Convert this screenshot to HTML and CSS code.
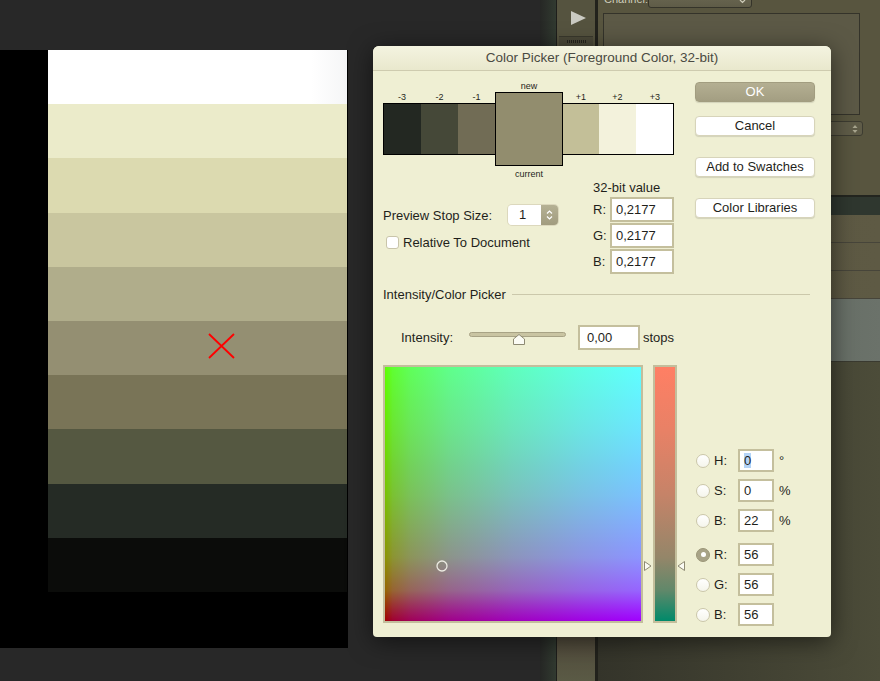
FILE: index.html
```html
<!DOCTYPE html>
<html>
<head>
<meta charset="utf-8">
<title>Color Picker</title>
<link rel="stylesheet" href="styles.css">
</head>
<body>
<div class="screen">
  <div class="desk">
    <div class="doc-col">
      <div class="doc">
        <div class="stripes">
          <div class="stripe s1"></div>
          <div class="stripe s2"></div>
          <div class="stripe s3"></div>
          <div class="stripe s4"></div>
          <div class="stripe s5"></div>
          <div class="stripe s6"></div>
          <div class="stripe s7"></div>
          <div class="stripe s8"></div>
          <div class="stripe s9"></div>
          <div class="stripe s10"></div>
        </div>
        <svg class="xmark" width="27" height="26" viewBox="0 0 27 26"><path d="M1 1 L26 25 M26 1 L1 25" stroke="#ff0000" stroke-width="1.8" fill="none"/></svg>
      </div>
    </div>
    <div class="gap-col"></div>
    <div class="dock">
      <div class="dock-edge"></div>
      <div class="toolbar">
        <div class="play-btn"><svg width="16" height="14" viewBox="0 0 16 14"><polygon points="1,0 16,7 1,14" fill="#cacac2"/></svg></div>
        <div class="grip"><div class="grip-dots"></div></div>
        <div class="toolbar-fill"></div>
      </div>
      <div class="dock-divider"></div>
      <div class="panel">
        <div class="channel-row"><span class="ch-label">Channel:</span><div class="ch-select"><svg width="7" height="5" viewBox="0 0 7 5"><path d="M1 1 L3.5 3.5 L6 1" stroke="#cfcdbb" stroke-width="1.2" fill="none"/></svg></div></div>
        <div class="panel-box"></div>
        <div class="panel-select"><svg width="6" height="10" viewBox="0 0 6 10"><polygon points="3,1 5.5,4 0.5,4" fill="#a9a68f"/><polygon points="3,9 5.5,6 0.5,6" fill="#a9a68f"/></svg></div>
        <div class="panel-spacer"></div>
        <div class="layer-head"></div>
        <div class="layer-row"></div>
        <div class="layer-row"></div>
        <div class="layer-row"></div>
        <div class="layer-row active"></div>
        <div class="panel-fill"></div>
      </div>
    </div>
  </div>

  <div class="dialog">
    <div class="titlebar">Color Picker (Foreground Color, 32-bit)</div>
    <div class="dlg-body">
      <div class="top">
        <div class="left-col">
          <div class="swatches">
            <div class="sw first"><div class="sw-label">-3</div><div class="sw-box c-3"></div></div>
            <div class="sw"><div class="sw-label">-2</div><div class="sw-box c-2"></div></div>
            <div class="sw"><div class="sw-label">-1</div><div class="sw-box c-1"></div></div>
            <div class="sw-new"><div class="sw-label">new</div><div class="sw-box c0"></div><div class="sw-label bottom">current</div></div>
            <div class="sw narrow"><div class="sw-label">+1</div><div class="sw-box c1"></div></div>
            <div class="sw"><div class="sw-label">+2</div><div class="sw-box c2"></div></div>
            <div class="sw last"><div class="sw-label">+3</div><div class="sw-box c3"></div></div>
          </div>
          <div class="below">
            <div class="preview-col">
              <div class="stop-row">
                <span class="stop-label">Preview Stop Size:</span>
                <div class="stepper">
                  <span class="stepper-val">1</span>
                  <span class="stepper-arrows"><svg width="7" height="12" viewBox="0 0 7 12"><path d="M1 4.5 L3.5 2 L6 4.5 M1 7.5 L3.5 10 L6 7.5" stroke="#fff" stroke-width="1.2" fill="none"/></svg></span>
                </div>
              </div>
              <div class="check-row"><span class="checkbox"></span><span>Relative To Document</span></div>
            </div>
            <div class="bit-col">
              <div class="bit-title">32-bit value</div>
              <div class="bit-rows">
                <div class="bit-row"><span class="bit-label">R:</span><span class="field bit-field">0,2177</span></div>
                <div class="bit-row"><span class="bit-label">G:</span><span class="field bit-field">0,2177</span></div>
                <div class="bit-row"><span class="bit-label">B:</span><span class="field bit-field">0,2177</span></div>
              </div>
            </div>
          </div>
        </div>
        <div class="btn-col">
          <div class="btn btn-ok">OK</div>
          <div class="btn btn-cancel">Cancel</div>
          <div class="btn btn-sp">Add to Swatches</div>
          <div class="btn btn-sp">Color Libraries</div>
        </div>
      </div>

      <div class="section-head"><span>Intensity/Color Picker</span><span class="rule"></span></div>

      <div class="intensity-row">
        <span class="int-label">Intensity:</span>
        <svg class="slider" width="97" height="14" viewBox="0 0 97 14">
          <rect x="0.5" y="0.5" width="96" height="4" rx="2" fill="#c9c4a2" stroke="#a8a385"/>
          <path d="M44.5 12.5 L44.5 7 L50 2.5 L55.5 7 L55.5 12.5 Z" fill="#fbfbf4" stroke="#8e8a73" stroke-width="1"/>
        </svg>
        <span class="field int-field">0,00</span>
        <span class="stops">stops</span>
      </div>

      <div class="picker">
        <div class="field-box">
          <div class="field-grad"></div>
          <svg class="marker" width="12" height="12" viewBox="0 0 12 12"><circle cx="6" cy="6" r="5" stroke="#ecebe2" stroke-width="1.3" fill="none"/></svg>
        </div>
        <div class="strip-wrap">
          <div class="strip"></div>
          <svg class="arr arr-l" width="8" height="10" viewBox="0 0 8 10"><path d="M0.5 0.5 L0.5 9.5 L7 5 Z" fill="#fbfbf4" stroke="#8e8a73"/></svg>
          <svg class="arr arr-r" width="8" height="10" viewBox="0 0 8 10"><path d="M7.5 0.5 L7.5 9.5 L1 5 Z" fill="#fbfbf4" stroke="#8e8a73"/></svg>
        </div>
        <div class="hsb">
          <div class="hsb-row"><span class="radio"></span><span class="hsb-label">H:</span><span class="field hsb-field"><span class="sel">0</span></span><span class="unit">°</span></div>
          <div class="hsb-row"><span class="radio"></span><span class="hsb-label">S:</span><span class="field hsb-field">0</span><span class="unit">%</span></div>
          <div class="hsb-row"><span class="radio"></span><span class="hsb-label">B:</span><span class="field hsb-field">22</span><span class="unit">%</span></div>
          <div class="hsb-row gap"><span class="radio on"><span class="dot"></span></span><span class="hsb-label">R:</span><span class="field hsb-field">56</span></div>
          <div class="hsb-row"><span class="radio"></span><span class="hsb-label">G:</span><span class="field hsb-field">56</span></div>
          <div class="hsb-row"><span class="radio"></span><span class="hsb-label">B:</span><span class="field hsb-field">56</span></div>
        </div>
      </div>
    </div>
  </div>
</div>
</body>
</html>
```

FILE: styles.css
```css
* { box-sizing: border-box; }
html, body { margin: 0; padding: 0; }
body {
  width: 880px;
  height: 681px;
  overflow: hidden;
  background: #282828;
  font-family: "Liberation Sans", Arial, sans-serif;
  color: #1f1f1b;
}
.screen { position: relative; width: 880px; height: 681px; overflow: hidden; }
.desk { display: flex; height: 681px; }

/* document canvas */
.doc-col { width: 348px; padding-top: 50px; }
.doc { position: relative; width: 348px; height: 598px; background: #000; padding-left: 48px; }
.stripes { width: 299px; height: 542px; display: flex; flex-direction: column; }
.stripe { flex: 1; }
.s1 { background: linear-gradient(to right, #ffffff 88%, #f5f6f7); }
.s2 { background: #ebebca; }
.s3 { background: #dcdab0; }
.s4 { background: #c9c69f; }
.s5 { background: #b0ad8b; }
.s6 { background: #948f72; }
.s7 { background: #797457; }
.s8 { background: #555841; }
.s9 { background: #252b25; }
.s10 { background: #0b0c0a; }
.xmark { position: absolute; left: 208px; top: 283px; }

.gap-col { width: 192px; background: #282828; }

/* right dock */
.dock { width: 340px; display: flex; }
.dock-edge { width: 17px; background: linear-gradient(to right, #262725, #313a30); border-right: 1px solid #1e1e1b; }
.toolbar { width: 38px; background: #55533f; display: flex; flex-direction: column; }
.play-btn { height: 36px; display: flex; align-items: center; justify-content: center; padding-left: 3px; }
.grip { height: 10px; margin: 0 2px; background: #4b4939; border-top: 1px solid #3a382d; display: flex; align-items: center; justify-content: center; }
.grip-dots { width: 19px; height: 3px; background: repeating-linear-gradient(to right, #25241d 0 1px, transparent 1px 2px); }
.toolbar-fill { flex: 1; background: linear-gradient(to bottom, #4d4c3c 0%, #4e4437 90%, #5a5a45 100%); }
.dock-divider { width: 3px; background: #22221c; }
.panel { flex: 1; background: #58553f; display: flex; flex-direction: column; }
.channel-row { height: 13px; display: flex; padding-left: 6px; }
.ch-label { font-size: 11px; line-height: 13px; margin-top: -7px; color: #cfcdbb; width: 44px; }
.ch-select { width: 104px; height: 18px; margin-top: -10px; background: linear-gradient(#6c6953, #5f5c48); border: 1px solid #35342a; border-radius: 3px; display: flex; justify-content: flex-end; align-items: flex-end; padding: 0 5px 3px 0; }
.panel-box { height: 102px; margin: 0 20px 0 5px; border: 1px solid #34332a; background: #5c5946; }
.panel-select { height: 15px; margin: 6px 17px 0 150px; border: 1px solid #3d3c31; border-radius: 3px; background: #5f5c48; display: flex; justify-content: flex-end; align-items: center; padding-right: 4px; }
.panel-spacer { height: 59px; }
.layer-head { height: 20px; background: #2f372f; border-top: 2px solid #23251f; }
.layer-row { height: 28px; border-bottom: 1px solid #47453a; background: linear-gradient(to right, #5b5641, #5e5a44); }
.layer-row.active { height: 63px; background: linear-gradient(to right, #566157, #6b726a); border-bottom: 1px solid #3a3a30; }
.panel-fill { flex: 1; background: linear-gradient(to right, #34342a, #4c4c39); }

/* dialog */
.dialog {
  position: absolute;
  left: 373px;
  top: 46px;
  width: 458px;
  height: 591px;
  background: #efefd3;
  border-radius: 6px 6px 4px 4px;
  box-shadow: 0 4px 24px rgba(0, 0, 0, 0.55);
  overflow: hidden;
}
.titlebar {
  height: 25px;
  border-bottom: 1px solid #cecbaf;
  background: linear-gradient(#f4f4e0, #e9e8cd);
  font-size: 13.5px;
  line-height: 24px;
  text-align: center;
  color: #4a4a42;
}
.dlg-body { padding: 0 16px 0 10px; }
.top { display: flex; justify-content: space-between; }
.left-col { width: 291px; }

.swatches { display: flex; align-items: flex-start; margin-top: 10px; }
.sw { width: 37px; margin-top: 11px; }
.sw.first, .sw.last { width: 38px; }
.sw.narrow { width: 36px; }
.sw-label { height: 11px; font-size: 9px; line-height: 11px; text-align: center; color: #1f1f1b; }
.sw-box { height: 52px; border-top: 1px solid #000; border-bottom: 1px solid #000; }
.sw.first .sw-box { border-left: 1px solid #000; }
.sw.last .sw-box { border-right: 1px solid #000; }
.sw-new { width: 68px; }
.sw-new .sw-box { height: 74px; border: 1px solid #000; }
.sw-new .sw-label.bottom { margin-top: 3px; }
.c-3 { background: #232822; }
.c-2 { background: #454838; }
.c-1 { background: #716c55; }
.c0 { background: #928d6e; }
.c1 { background: #c3bf98; }
.c2 { background: #f3f2dc; }
.c3 { background: #ffffff; }

.below { display: flex; }
.preview-col { padding-top: 25px; }
.stop-row { display: flex; align-items: center; height: 20px; font-size: 13px; }
.stop-label { width: 125px; }
.stepper { width: 50px; height: 20px; display: flex; border-radius: 4px; overflow: hidden; box-shadow: 0 0 0 1px #dcd8bd; }
.stepper-val { flex: 1; background: #fff; padding-left: 11px; line-height: 20px; }
.stepper-arrows { width: 17px; background: linear-gradient(#b5b194, #a19c7f); display: flex; align-items: center; justify-content: center; }
.check-row { display: flex; align-items: center; margin-top: 11px; padding-left: 3px; height: 13px; font-size: 13px; }
.checkbox { width: 13px; height: 13px; background: #fff; border: 1px solid #c9c5aa; border-radius: 3px; margin-right: 4px; }

.bit-col { margin-left: auto; width: 81px; }
.bit-title { font-size: 13px; line-height: 15px; height: 15px; white-space: nowrap; }
.bit-rows { margin-top: 2px; display: flex; flex-direction: column; gap: 1px; }
.bit-row { display: flex; align-items: center; height: 25px; font-size: 13px; }
.bit-label { width: 17px; }
.field { background: #fff; border: 2px solid #c4bf9d; font-size: 13px; padding-left: 4px; color: #1f1f1b; }
.bit-field { width: 64px; height: 25px; line-height: 21px; }

.btn-col { width: 120px; padding-top: 11px; display: flex; flex-direction: column; }
.btn {
  height: 20px;
  border-radius: 4px;
  background: #fff;
  border: 1px solid #d7d4ba;
  font-size: 13px;
  text-align: center;
  line-height: 18px;
  box-shadow: 0 1px 1px rgba(0, 0, 0, 0.12);
}
.btn-ok { background: linear-gradient(#b4af92, #a39e82); color: #fff; border-color: #a29d80; }
.btn-cancel { margin-top: 14px; }
.btn-sp { margin-top: 21px; }

.section-head { display: flex; align-items: center; margin-top: 13px; height: 15px; font-size: 13px; }
.rule { flex: 1; height: 1px; background: #cbc8ab; margin: 0 5px 0 6px; }

.intensity-row { display: flex; align-items: center; height: 25px; margin-top: 23px; padding-left: 18px; font-size: 13px; }
.int-label { width: 68px; }
.slider { align-self: flex-start; margin-top: 7px; margin-right: 12px; }
.int-field { width: 62px; height: 25px; line-height: 21px; padding-left: 7px; }
.stops { margin-left: 3px; }

.picker { display: flex; margin-top: 15px; }
.field-box { position: relative; width: 260px; height: 258px; border: 2px solid #c3be9c; }
.field-grad {
  width: 100%;
  height: 100%;
  background:
    linear-gradient(to bottom, rgb(0,255,0) 0%, rgb(0,228,0) 25%, rgb(0,194,0) 50%, rgb(0,148,0) 75%, rgb(0,100,0) 88%, rgb(0,40,0) 95%, rgb(0,0,0) 100%),
    linear-gradient(to right, rgb(0,0,0) 0%, rgb(0,0,50) 3%, rgb(0,0,90) 10%, rgb(0,0,138) 25%, rgb(0,0,188) 50%, rgb(0,0,225) 75%, rgb(0,0,255) 100%),
    linear-gradient(to bottom, rgb(95,0,0) 0%, rgb(115,0,0) 40%, rgb(140,0,0) 75%, rgb(160,0,0) 100%);
  background-blend-mode: screen;
}
.marker { position: absolute; left: 51px; top: 193px; }
.strip-wrap { position: relative; margin-left: 10px; width: 24px; height: 258px; border: 2px solid #c3be9c; }
.strip {
  height: 100%;
  background: linear-gradient(to bottom, rgb(255,127,100) 0%, rgb(232,129,102) 25%, rgb(198,131,104) 50%, rgb(148,134,105) 75%, rgb(96,136,106) 88%, rgb(40,137,106) 95%, rgb(0,138,106) 100%);
}
.arr { position: absolute; top: 194px; }
.arr-l { left: -11px; }
.arr-r { right: -10px; }

.hsb { margin-left: 19px; padding-top: 84px; display: flex; flex-direction: column; }
.hsb-row { display: flex; align-items: center; height: 23px; margin-top: 7px; font-size: 13px; }
.hsb-row:first-child { margin-top: 0; }
.hsb-row.gap { margin-top: 11px; }
.radio { width: 14px; height: 14px; border-radius: 50%; border: 1px solid #cbc7ab; background: linear-gradient(#ffffff, #f5f5eb); }
.radio.on { background: #a8a387; border-color: #9b9678; display: flex; align-items: center; justify-content: center; }
.dot { width: 5px; height: 5px; border-radius: 50%; background: #fff; }
.hsb-label { width: 24px; margin-left: 4px; }
.hsb-field { width: 36px; height: 23px; line-height: 19px; padding-left: 4px; }
.sel { background: #b4d4f6; }
.unit { margin-left: 5px; }
```
